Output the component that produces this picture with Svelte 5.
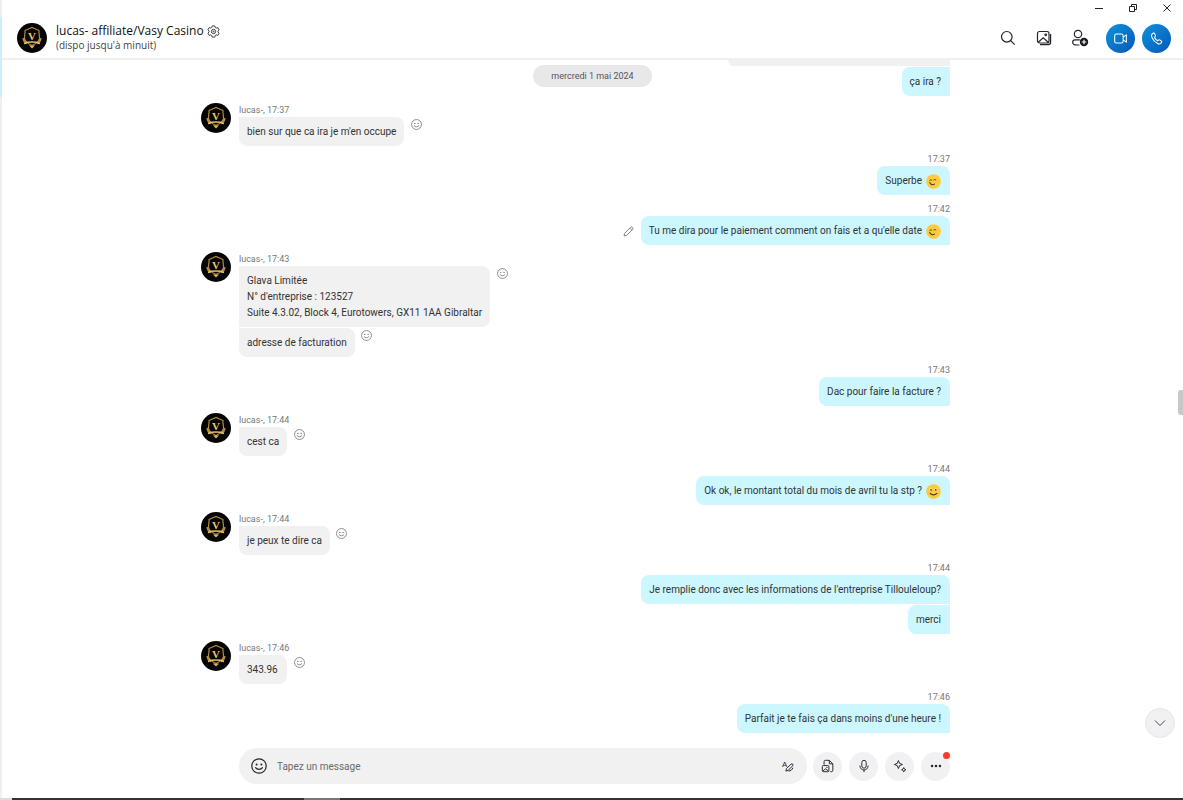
<script lang="ts">
    interface Message {
        lines: string[];
        emoji?: "wink" | "smile";
        react?: boolean;
        edit?: boolean;
    }

    interface Group {
        mine: boolean;
        time: string;
        messages: Message[];
    }

    let draft: string = $state("");

    const groups: Group[] = [
        {
            mine: false,
            time: "17:37",
            messages: [
                { lines: ["bien sur que ca ira je m'en occupe"], react: true },
            ],
        },
        {
            mine: true,
            time: "17:37",
            messages: [{ lines: ["Superbe"], emoji: "wink" }],
        },
        {
            mine: true,
            time: "17:42",
            messages: [
                {
                    lines: [
                        "Tu me dira pour le paiement comment on fais et a qu'elle date",
                    ],
                    emoji: "wink",
                    edit: true,
                },
            ],
        },
        {
            mine: false,
            time: "17:43",
            messages: [
                {
                    lines: [
                        "Glava Limitée",
                        "N° d'entreprise : 123527",
                        "Suite 4.3.02, Block 4, Eurotowers, GX11 1AA Gibraltar",
                    ],
                    react: true,
                },
                { lines: ["adresse de facturation"], react: true },
            ],
        },
        {
            mine: true,
            time: "17:43",
            messages: [{ lines: ["Dac pour faire la facture ?"] }],
        },
        {
            mine: false,
            time: "17:44",
            messages: [{ lines: ["cest ca"], react: true }],
        },
        {
            mine: true,
            time: "17:44",
            messages: [
                {
                    lines: ["Ok ok, le montant total du mois de avril tu la stp ?"],
                    emoji: "smile",
                },
            ],
        },
        {
            mine: false,
            time: "17:44",
            messages: [{ lines: ["je peux te dire ca"], react: true }],
        },
        {
            mine: true,
            time: "17:44",
            messages: [
                {
                    lines: [
                        "Je remplie donc avec les informations de l'entreprise Tillouleloup?",
                    ],
                },
                { lines: ["merci"] },
            ],
        },
        {
            mine: false,
            time: "17:46",
            messages: [{ lines: ["343.96"], react: true }],
        },
        {
            mine: true,
            time: "17:46",
            messages: [
                { lines: ["Parfait je te fais ça dans moins d'une heure !"] },
            ],
        },
    ];
</script>

{#snippet avatar()}
    <svg class="avatar" viewBox="0 0 30 30" aria-hidden="true">
        <circle cx="15" cy="15" r="15" fill="#050505" />
        <g fill="none" stroke="#b58a3c" stroke-width="1.200">
            <path d="M8 7.500 11.500 6 15 4.500 18.500 6 22 7.500c-.6 3 1 5 .4 8.500-.5 3-3.200 4.500-7.400 6.500-4.200-2-6.900-3.500-7.400-6.500-.6-3.500 1-5.500.4-8.500z" />
            <path d="M6.500 15c.3 2.500 1.300 4.200 3.500 5M23.500 15c-.3 2.500-1.300 4.200-3.500 5" stroke-width="2.400" />
            <path d="M7 20.500c5-1.800 11-1.800 16 0" stroke="#e0bd69" stroke-width="1.600" />
        </g>
        <path d="M12 22.500h6L15 25.500z" fill="#d9b45c" />
        <text x="15" y="16.500" text-anchor="middle">V</text>
    </svg>
{/snippet}

{#snippet face()}
    <svg viewBox="0 0 16 16" aria-hidden="true">
        <circle cx="8" cy="8" r="7.200" fill="none" stroke="currentColor" stroke-width="1.200" />
        <circle cx="5.600" cy="6.400" r="1" fill="currentColor" />
        <circle cx="10.400" cy="6.400" r="1" fill="currentColor" />
        <path d="M4.500 9.700c1.600 2.300 5.400 2.300 7 0" fill="none" stroke="currentColor" stroke-width="1.200" stroke-linecap="round" />
    </svg>
{/snippet}

{#snippet emoji(kind: string)}
    <svg class="emoji" viewBox="0 0 16 16" role="img" aria-label={kind}>
        <circle cx="8" cy="8" r="7.800" fill="#ffcb3d" />
        {#if kind === "wink"}
            <g fill="none" stroke="#3c3a31" stroke-linecap="round">
                <path d="M4 6.800c.5-.7 1.400-.8 2-.3M8.300 6.300c.8-.6 1.500-.4 2.200 0" stroke-width="1" />
                <path d="M4 9c.6 2.400 3 3 5 1.800" stroke-width="1.200" />
            </g>
        {:else}
            <circle cx="5.200" cy="6.200" r="1.400" fill="#fff" />
            <circle cx="10.600" cy="6.200" r="1.400" fill="#fff" />
            <circle cx="5.400" cy="6.300" r=".9" fill="#3c2d1a" />
            <circle cx="10.500" cy="6.300" r=".9" fill="#3c2d1a" />
            <path d="M4.500 10c1.800 2.200 5.200 2.200 7 0" fill="none" stroke="#4c3716" stroke-width="1.300" stroke-linecap="round" />
        {/if}
    </svg>
{/snippet}

<div class="window">
    <aside class="sidebar"><span class="active"></span></aside>

    <main>
        <div class="titlebar">
            <button aria-label="Réduire">
                <svg viewBox="0 0 10 10"><path d="M1 5.500h8" /></svg>
            </button>
            <button aria-label="Restaurer">
                <svg viewBox="0 0 10 10">
                    <path d="M1.500 3.500h5v5h-5zM3.500 3.500v-2h5v5h-2" />
                </svg>
            </button>
            <button aria-label="Fermer">
                <svg viewBox="0 0 10 10"><path d="m1.500 1.500 7 7m0-7-7 7" /></svg>
            </button>
        </div>

        <header>
            {@render avatar()}
            <div class="contact">
                <h1>
                    lucas- affiliate/Vasy Casino
                    <svg viewBox="0 0 14 14" aria-hidden="true">
                        <path d="M5.600 1h2.800l.5 1.700 1 .6 1.800-.5L13 5.200 11.800 6.500v1L13 8.800l-1.300 2.400-1.800-.5-1 .6L8.400 13H5.600l-.5-1.700-1-.6-1.800.5L1 8.800l1.200-1.300v-1L1 5.200l1.300-2.400 1.800.5 1-.6z" />
                        <circle cx="7" cy="7" r="2.300" />
                        <circle cx="7" cy="7" r=".5" />
                    </svg>
                </h1>
                <p>(dispo jusqu'à minuit)</p>
            </div>
            <nav class="tools">
                <button aria-label="Rechercher">
                    <svg viewBox="0 0 16 16">
                        <circle cx="6.800" cy="6.800" r="5.300" />
                        <path d="m10.700 10.700 4 4" />
                    </svg>
                </button>
                <button aria-label="Galerie">
                    <svg viewBox="0 0 16 16">
                        <rect x="1.500" y="1.500" width="11.500" height="11.500" rx="2" />
                        <path d="m2.300 12.200 4.900-4.400 5 4.400" />
                        <circle cx="9.700" cy="4.800" r=".8" />
                        <path d="M14.600 4v8.200c0 1.500-.9 2.400-2.400 2.400H4" />
                    </svg>
                </button>
                <button aria-label="Ajouter un contact">
                    <svg class="person" viewBox="0 0 18 18">
                        <circle cx="7" cy="5" r="3.700" />
                        <path d="M8.500 16H6c-2.600 0-4.300-1-4.300-2.800 0-1.500.8-2.300 2.200-2.300h5" />
                        <circle cx="13" cy="13" r="4.200" fill="#17171c" stroke="none" />
                        <path d="M13 10.700v4.600M10.700 13h4.600" stroke="#fff" />
                    </svg>
                </button>
            </nav>
            <div class="calls">
                <button aria-label="Appel vidéo">
                    <svg viewBox="0 0 16 16">
                        <rect x="1.800" y="3.300" width="9" height="9.400" rx="1.800" />
                        <path d="m10.800 6.500 3.400-2.300v7.600l-3.400-2.300" />
                    </svg>
                </button>
                <button aria-label="Appel audio">
                    <svg viewBox="0 0 16 16">
                        <path d="M4.500 2.200 3.200 3.400c-.8.8-.7 2-.2 3.200 1.300 3 3.300 5.200 6.200 6.700 1.200.6 2.400.7 3.200-.1l.9-.9c.5-.5.4-1.200-.1-1.600l-1.800-1.200c-.5-.3-1-.2-1.400.2l-.7.700C7.700 9.500 6.500 8.200 5.900 6.900l.7-.8c.4-.4.4-.9.2-1.400l-.9-2.100c-.3-.6-.9-.8-1.400-.4z" />
                    </svg>
                </button>
            </div>
        </header>

        <section class="chat">
            <div class="date"><time datetime="2024-05-01">mercredi 1 mai 2024</time></div>
            <div class="column">
                <div class="group mine">
                    <div class="stack">
                        <div class="quoted"></div>
                        <div class="row"><div class="bubble">ça ira ?</div></div>
                    </div>
                </div>
                {#each groups as group}
                    <div class="group" class:mine={group.mine} class:theirs={!group.mine}>
                        {#if !group.mine}
                            {@render avatar()}
                        {/if}
                        <div class="stack">
                            <span class="time">{group.mine ? "" : "lucas-, "}{group.time}</span>
                            {#each group.messages as message}
                                <div class="row">
                                    {#if message.edit}
                                        <button class="action edit" aria-label="Modifier">
                                            <svg viewBox="0 0 16 16">
                                                <path d="m1.500 14.500 1-4L11.200 1.800c1.800-1.500 4.500 1.200 3 3L5.500 13.500zM10 3l3 3" fill="none" stroke="currentColor" stroke-width="1.300" stroke-linejoin="round" />
                                            </svg>
                                        </button>
                                    {/if}
                                    <div class="bubble">
                                        <div>
                                            {#each message.lines as line}
                                                <p>{line}</p>
                                            {/each}
                                        </div>
                                        {#if message.emoji}
                                            {@render emoji(message.emoji)}
                                        {/if}
                                    </div>
                                    {#if message.react}
                                        <button class="action" aria-label="Réagir">
                                            {@render face()}
                                        </button>
                                    {/if}
                                </div>
                            {/each}
                        </div>
                    </div>
                {/each}
            </div>
            <button class="jump" aria-label="Derniers messages">
                <svg viewBox="0 0 14 14"><path d="m2 4.500 5 5 5-5" /></svg>
            </button>
            <span class="thumb"></span>
        </section>

        <footer>
            <form class="composer" onsubmit={(event) => event.preventDefault()}>
                <div class="field">
                    <button type="button" class="smiley" aria-label="Émoticônes">
                        {@render face()}
                    </button>
                    <input
                        type="text"
                        aria-label="Message"
                        placeholder="Tapez un message"
                        bind:value={draft}
                    />
                    <button type="button" class="format" aria-label="Mise en forme">
                        <svg viewBox="0 0 16 16">
                            <text x="1" y="9">A</text>
                            <path d="m5.500 13.800.8-2.800 5.200-5.200c1.300-1 3 .5 2 1.900l-5.400 5.300zM8.500 13.800c2.500 0 4.500-1.600 5-3.800" />
                        </svg>
                    </button>
                </div>
                <div class="extras">
                    <button type="button" aria-label="Ajouter des fichiers">
                        <svg viewBox="0 0 16 16">
                            <path d="M3.500 6.500V3c0-1 .5-1.500 1.500-1.500h4.500l4 4V13c0 1-.5 1.500-1.500 1.500h-1.500M9.500 1.500v4h4" />
                            <rect x="1.500" y="7.500" width="7.500" height="7" rx="1.200" />
                            <path d="m2 13.800 3.200-2.600 3.300 2.600" />
                            <circle cx="6.800" cy="9.600" r=".3" />
                        </svg>
                    </button>
                    <button type="button" aria-label="Message vocal">
                        <svg viewBox="0 0 16 16">
                            <rect x="5.500" y="1.500" width="5" height="9" rx="2.500" />
                            <path d="M3.300 7.500c0 6.700 9.400 6.700 9.400 0M8 12.500v2.500" />
                        </svg>
                    </button>
                    <button type="button" aria-label="Copilote">
                        <svg viewBox="0 0 16 16">
                            <path d="M6.200 1.800 7.500 5l3.300 1.300-3.300 1.300-1.300 3.300-1.300-3.300L1.600 6.300 4.900 5zM12.300 9.800l.8 1.700 1.700.8-1.700.8-.8 1.700-.8-1.700-1.700-.8 1.700-.8z" />
                        </svg>
                    </button>
                    <button type="button" class="more" aria-label="Plus">
                        <svg viewBox="0 0 16 16">
                            <g fill="currentColor" stroke="none">
                                <circle cx="3.500" cy="8" r="1.400" />
                                <circle cx="8" cy="8" r="1.400" />
                                <circle cx="12.500" cy="8" r="1.400" />
                            </g>
                        </svg>
                        <span class="badge"></span>
                    </button>
                </div>
            </form>
        </footer>
    </main>
</div>
<div class="taskbar"><span></span></div>

<style>
    :global(body) {
        margin: 0;
        background: #fff;
    }

    :global(#app) {
        display: flex;
        flex-direction: column;
        min-height: 100vh;
    }

    h1,
    p {
        margin: 0;
        font-weight: 400;
    }

    button {
        display: flex;
        align-items: center;
        justify-content: center;
        flex: none;
        padding: 0;
        border: 0;
        background: none;
        color: #24242b;
        cursor: pointer;
    }

    svg {
        display: block;
        flex: none;
    }

    .window {
        display: flex;
        flex: 1;
        font-family: Roboto, "Segoe UI", sans-serif;
        font-size: 10px;
        line-height: 16px;
        color: #333;
    }

    .sidebar {
        width: 2px;
        padding-top: 17px;
        box-sizing: border-box;
        background: #efeff0;
    }

    .sidebar .active {
        display: block;
        height: 80px;
        background: #cdeffa;
    }

    main {
        display: flex;
        flex-direction: column;
        flex: 1;
        min-width: 0;
    }

    .titlebar {
        display: flex;
        justify-content: flex-end;
        gap: 10px;
        padding: 0 4px 3px 0;
    }

    .titlebar button {
        width: 24px;
        height: 15px;
    }

    .titlebar svg {
        width: 10px;
        height: 10px;
        fill: none;
        stroke: #222;
    }

    header {
        display: flex;
        align-items: center;
        height: 40px;
        padding: 0 12px 0 15px;
        border-bottom: 2px solid #efefef;
    }

    .avatar {
        width: 30px;
        height: 30px;
    }

    .avatar text {
        font-family: "Liberation Serif", serif;
        font-size: 11px;
        font-weight: 700;
        fill: #e8c46d;
    }

    .contact {
        flex: 1;
        margin-left: 9px;
        line-height: 14px;
        font-family: "Open Sans", "Segoe UI", sans-serif;
        font-size: 10px;
        color: #444;
    }

    .contact h1 {
        display: flex;
        align-items: center;
        gap: 3px;
        font-size: 12px;
        line-height: 14px;
        color: #111;
    }

    .contact svg {
        width: 13px;
        height: 13px;
        fill: none;
        stroke: #333;
    }

    .tools {
        display: flex;
        gap: 12px;
        margin-right: 14px;
    }

    .tools button {
        width: 24px;
        height: 24px;
    }

    .tools svg {
        width: 16px;
        height: 16px;
        fill: none;
        stroke: #24242b;
        stroke-width: 1.2;
    }

    .tools .person {
        width: 18px;
        height: 18px;
    }

    .calls {
        display: flex;
        gap: 7px;
    }

    .calls button {
        width: 29px;
        height: 29px;
        border-radius: 50%;
        background: linear-gradient(135deg, #0a95dc, #0a55b8);
    }

    .calls svg {
        width: 15px;
        height: 15px;
        fill: none;
        stroke: #fff;
        stroke-width: 1.1;
    }

    .chat {
        position: relative;
        flex: 1;
        padding-right: 34px;
    }

    .column,
    .composer {
        max-width: 749px;
        margin: 0 auto;
    }

    .date {
        position: absolute;
        top: 5px;
        left: 0;
        right: 0;
        display: flex;
        justify-content: center;
        pointer-events: none;
    }

    .date time {
        padding: 3px 18px;
        border-radius: 11px;
        background: #e8e8ea;
        font-size: 9px;
        color: #555;
    }

    .group {
        display: flex;
        gap: 8px;
        margin-top: 7px;
    }

    .group:first-child {
        margin-top: 0;
    }

    .theirs + .mine {
        margin-top: 6px;
    }

    .stack {
        display: flex;
        flex-direction: column;
        flex: 1;
        gap: 1px;
    }

    .mine .stack {
        align-items: flex-end;
    }

    .time {
        margin-bottom: -1px;
        font-size: 9px;
        line-height: 14px;
        color: #777;
    }

    .row {
        display: flex;
    }

    .bubble {
        display: flex;
        align-items: center;
        gap: 4px;
        box-sizing: border-box;
        padding: 7px 8px 6px;
        border-radius: 0 8px 8px 0;
        background: #f1f1f1;
    }

    .theirs .bubble {
        min-width: 48px;
    }

    .theirs .row:last-child .bubble {
        border-radius: 0 8px 8px 8px;
    }

    .mine .bubble {
        padding-right: 9px;
        border-radius: 8px 0 0 8px;
        background: #ccf7ff;
    }

    .mine .time + .row .bubble {
        border-top-right-radius: 8px;
    }

    .quoted {
        width: 222px;
        height: 6px;
        border-radius: 0 0 0 8px;
        background: #f1f1f3;
    }

    .emoji {
        width: 15px;
        height: 15px;
    }

    .action {
        width: 12px;
        height: 12px;
        margin: 1px 6px 0;
        color: #777;
    }

    .action svg {
        width: 11px;
        height: 11px;
    }

    .edit {
        align-self: center;
    }

    .jump {
        position: absolute;
        right: 8px;
        bottom: 10px;
        width: 30px;
        height: 30px;
        border: 1px solid #e6e6e9;
        border-radius: 50%;
        background: #f1f1f4;
    }

    .jump svg {
        width: 14px;
        height: 14px;
        fill: none;
        stroke: #444;
    }

    .thumb {
        position: absolute;
        top: 48%;
        right: 0;
        width: 5px;
        height: 25px;
        border-radius: 3px 0 0 3px;
        background: #c8c8c8;
    }

    footer {
        padding: 0 34px 14px 0;
    }

    .composer {
        display: flex;
        align-items: center;
        gap: 6px;
        box-sizing: border-box;
        padding-left: 38px;
    }

    .field {
        display: flex;
        align-items: center;
        flex: 1;
        height: 36px;
        padding: 0 12px;
        border-radius: 18px;
        background: #f1f1f1;
    }

    .field input {
        flex: 1;
        min-width: 0;
        padding: 0 10px;
        border: 0;
        outline: 0;
        background: none;
        font-family: inherit;
        font-size: 10px;
        color: #333;
    }

    .field input::placeholder {
        color: #6a6a6a;
        opacity: 1;
    }

    .smiley svg {
        width: 16px;
        height: 16px;
    }

    .format svg,
    .extras svg {
        width: 14px;
        height: 14px;
        fill: none;
        stroke: #24242b;
        stroke-width: 1.1;
        stroke-linejoin: round;
    }

    .format text {
        font-size: 9px;
        fill: #24242b;
        stroke: none;
    }

    .extras {
        display: flex;
        gap: 7px;
    }

    .extras button {
        width: 29px;
        height: 29px;
        border-radius: 50%;
        background: #f1f1f4;
    }

    .more {
        position: relative;
    }

    .badge {
        position: absolute;
        top: 0;
        right: 0;
        width: 7px;
        height: 7px;
        border-radius: 50%;
        background: #f8392b;
    }

    .taskbar {
        display: flex;
        height: 2px;
        padding-left: 292px;
        border-left: 12px solid #ddd;
        background: #333;
    }

    .taskbar span {
        width: 36px;
        background: #777;
    }
</style>
